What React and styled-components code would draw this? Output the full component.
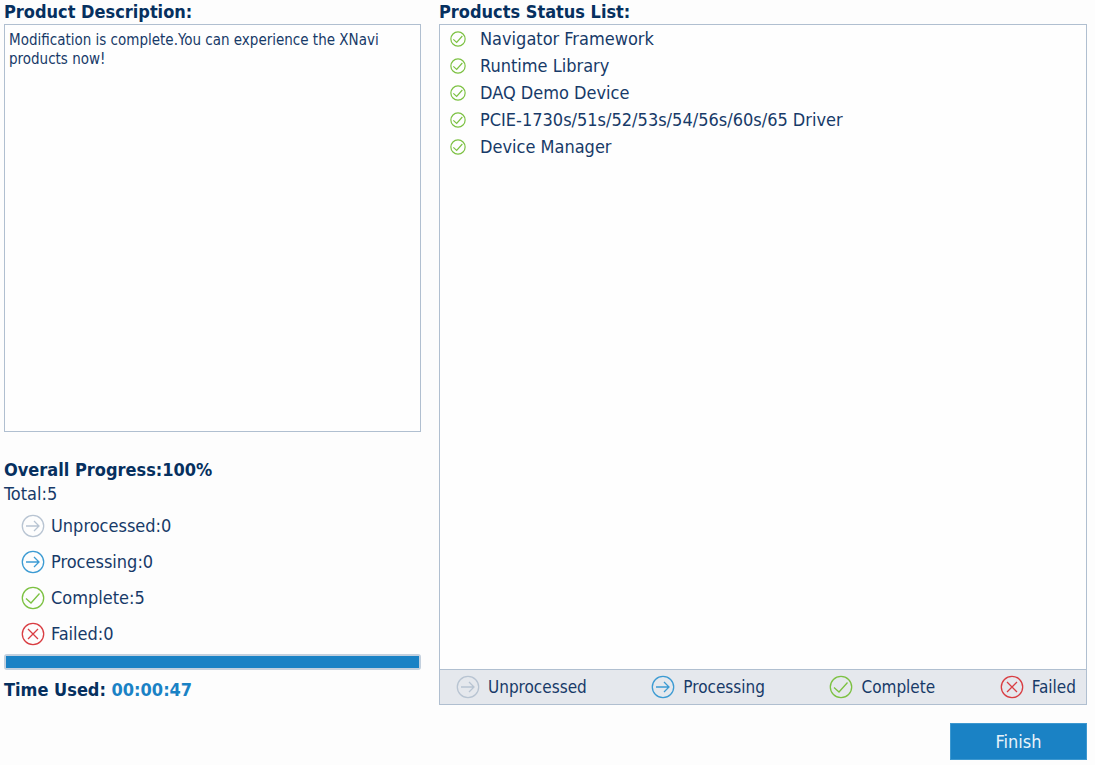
import React from "react";
import styled, { createGlobalStyle } from "styled-components";

const color = {
  page: "#fdfdfd",
  ink: "#173a68",
  strong: "#06305f",
  blue: "#1a82c5",
  border: "#b0bfd0",
  legend: "#e5e8ed",
};

const GlobalStyle = createGlobalStyle`
  *, *::before, *::after { box-sizing: border-box; }
  body {
    margin: 0;
    background: ${color.page};
    color: ${color.ink};
    font: 18px/24px Tahoma, "DejaVu Sans Condensed", "Noto Sans", sans-serif;
  }
`;

const Page = styled.main`
  display: flex;
  flex-direction: column;
  min-height: 100vh;
  padding: 0 8px 5px 4px;
`;

const Columns = styled.div`
  flex: 1;
  display: grid;
  grid-template-columns: minmax(0, 417fr) minmax(0, 648fr);
  gap: 18px;
`;

const Column = styled.section`
  display: flex;
  flex-direction: column;
`;

const Heading = styled.h2`
  display: block;
  margin: 0;
  font-size: 18px;
  line-height: 24px;
  font-weight: bold;
  color: ${color.strong};
`;

const Description = styled.textarea`
  flex: 1;
  width: 100%;
  padding: 6px 4px;
  border: 1px solid ${color.border};
  border-radius: 0;
  background: #fefefe;
  color: inherit;
  font-family: inherit;
  font-size: 15px;
  line-height: 19px;
  resize: none;
  outline: none;
`;

const Summary = styled.div`
  padding: 26px 0 3px;
`;

const Total = styled.p`
  margin: 0;
`;

const Counts = styled.ul`
  margin: 2px 0;
  padding: 0 0 0 17px;
  list-style: none;
`;

const Count = styled.li`
  display: flex;
  align-items: center;
  gap: 6px;
  height: 36px;
`;

const Progress = styled.progress`
  display: block;
  appearance: none;
  width: 100%;
  height: 16px;
  border: 2px solid #c3d0de;
  border-radius: 3px;
  background: #ffffff;

  &::-webkit-progress-bar { background: #ffffff; }
  &::-webkit-progress-value { background: ${color.blue}; }
`;

const TimeUsed = styled(Heading)`
  margin: 8px 0 0;
`;

const Time = styled.span`
  color: ${color.blue};
`;

const StatusPanel = styled.div`
  flex: 1;
  display: flex;
  flex-direction: column;
  border: 1px solid ${color.border};
  background: #fefefe;
`;

const Products = styled.ul`
  flex: 1;
  margin: 0;
  padding: 0 10px;
  list-style: none;
`;

const Product = styled.li`
  display: flex;
  align-items: center;
  gap: 14px;
  height: 27px;
`;

const Legend = styled.ul`
  display: flex;
  justify-content: space-between;
  margin: 0;
  padding: 0 10px 0 16px;
  border-top: 1px solid ${color.border};
  background: ${color.legend};
  font-size: 17px;
  list-style: none;
`;

const LegendItem = styled.li`
  display: flex;
  align-items: center;
  gap: 8px;
  height: 34px;
`;

const Actions = styled.footer`
  display: flex;
  justify-content: flex-end;
  padding-top: 18px;
`;

const FinishButton = styled.button`
  width: 137px;
  height: 37px;
  border: 1px solid #3d98d0;
  border-radius: 0;
  background: ${color.blue};
  color: #e8f3fa;
  font: inherit;
  cursor: pointer;
`;

const Icon = styled.svg`
  flex: none;
  display: block;
  fill: none;
  stroke: ${(p) => p.$color};
`;

const marks = {
  unprocessed: { color: "#b8c4d2", path: "M5 12H18M13 7L18 12L13 17" },
  processing: { color: "#3c9bd3", path: "M5 12H18M13 7L18 12L13 17" },
  complete: { color: "#7cc142", path: "M5 12.5L10 17L18.5 7.5" },
  failed: { color: "#d93d42", path: "M7 7L17 17M17 7L7 17" },
};

function StatusIcon({ status, size = 24 }) {
  const mark = marks[status];
  return (
    <Icon
      $color={mark.color}
      width={size}
      height={size}
      viewBox="0 0 24 24"
      strokeWidth={size < 24 ? 1.8 : 1.3}
      aria-hidden="true"
    >
      <circle cx="12" cy="12" r="10.7" />
      <path d={mark.path} />
    </Icon>
  );
}

const states = [
  { status: "unprocessed", label: "Unprocessed", count: 0 },
  { status: "processing", label: "Processing", count: 0 },
  { status: "complete", label: "Complete", count: 5 },
  { status: "failed", label: "Failed", count: 0 },
];

const products = [
  "Navigator Framework",
  "Runtime Library",
  "DAQ Demo Device",
  "PCIE-1730s/51s/52/53s/54/56s/60s/65 Driver",
  "Device Manager",
];

export default function App() {
  return (
    <>
      <GlobalStyle />
      <Page>
        <Columns>
          <Column>
            <Heading as="label" htmlFor="description">
              Product Description:
            </Heading>
            <Description
              id="description"
              readOnly
              value="Modification is complete.You can experience the XNavi products now!"
            />
            <Summary>
              <Heading as="label" htmlFor="progress">
                Overall Progress:100%
              </Heading>
              <Total>Total:5</Total>
              <Counts>
                {states.map((s) => (
                  <Count key={s.status}>
                    <StatusIcon status={s.status} />
                    <span>{`${s.label}:${s.count}`}</span>
                  </Count>
                ))}
              </Counts>
              <Progress id="progress" max="100" value="100" />
              <TimeUsed as="p">
                Time Used: <Time>00:00:47</Time>
              </TimeUsed>
            </Summary>
          </Column>
          <Column>
            <Heading>Products Status List:</Heading>
            <StatusPanel>
              <Products>
                {products.map((name) => (
                  <Product key={name}>
                    <StatusIcon status="complete" size={16} />
                    <span>{name}</span>
                  </Product>
                ))}
              </Products>
              <Legend>
                {states.map((s) => (
                  <LegendItem key={s.status}>
                    <StatusIcon status={s.status} />
                    <span>{s.label}</span>
                  </LegendItem>
                ))}
              </Legend>
            </StatusPanel>
          </Column>
        </Columns>
        <Actions>
          <FinishButton type="button">Finish</FinishButton>
        </Actions>
      </Page>
    </>
  );
}
